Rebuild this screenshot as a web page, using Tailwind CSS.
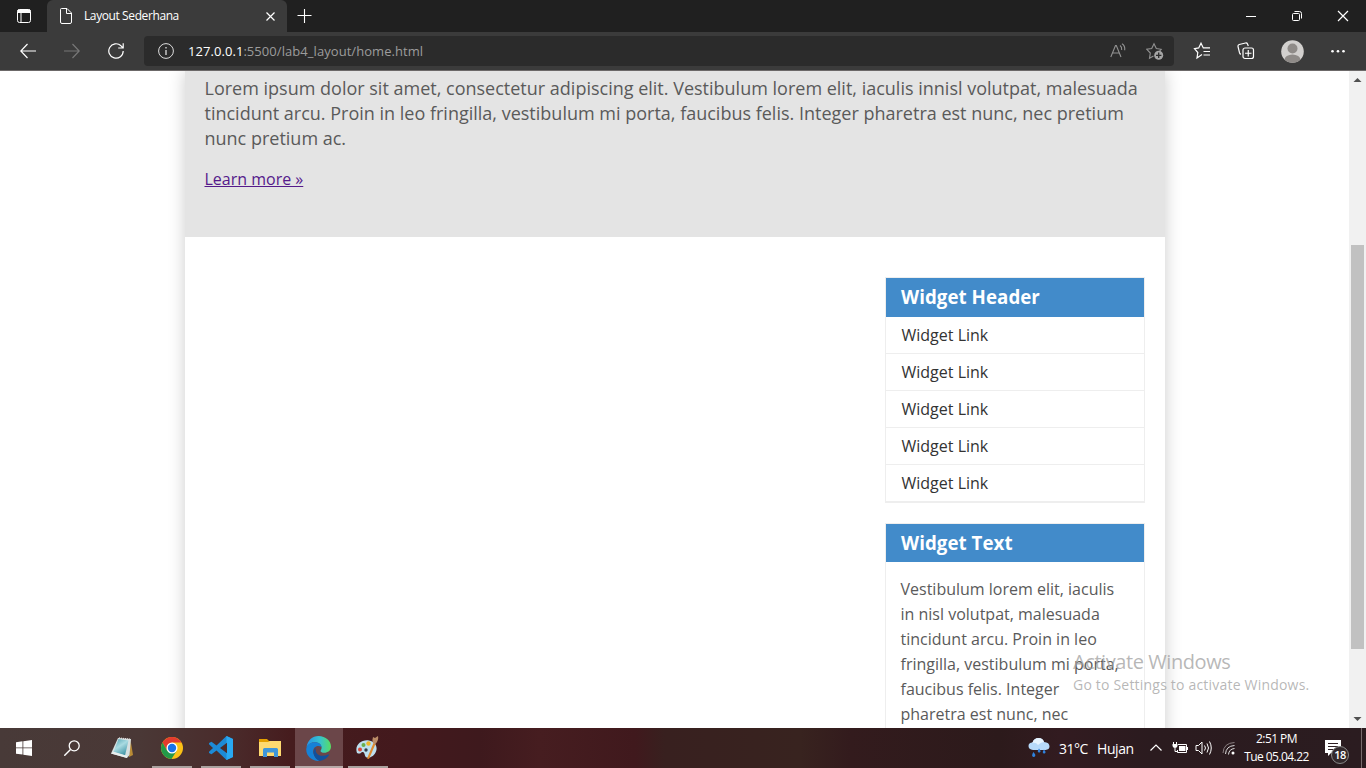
<!DOCTYPE html>
<html lang="id">
<head>
<meta charset="utf-8">
<title>Layout Sederhana</title>
<script src="https://cdn.jsdelivr.net/npm/@tailwindcss/browser@4"></script>
</head>
<body class="w-[1366px] h-[768px] overflow-hidden flex flex-col bg-white font-['Open_Sans',sans-serif]">
<!-- tab strip -->
<header class="h-8 shrink-0 bg-[#202020] flex text-white">
  <div class="w-[47px] flex items-center justify-center">
    <svg class="w-4 h-4" viewBox="0 0 16 16"><rect x="1.5" y="1.5" width="13" height="13" rx="2" fill="none" stroke="#fff"/><path d="M2 2h12v2.500H2z" fill="#fff" stroke="#fff"/><path d="M5 5v9.500" stroke="#fff"/></svg>
  </div>
  <div class="w-[240px] bg-[#3b3b3b] rounded-t-md flex items-center pl-[11px] pr-[10px]">
    <svg class="w-4 h-4" viewBox="0 0 16 16"><path d="M3.500.5h5.500l4.500 4.500v9q0 1.500-1.500 1.500H4q-1.500 0-1.500-1.500V1.500q0-1 1-1zM8.500.5v5h5" fill="none" stroke="#fff"/></svg>
    <span class="ml-[10px] text-[12px] leading-4 whitespace-nowrap tracking-[-0.4px]">Layout Sederhana</span>
    <svg class="w-3 h-3 ml-auto" viewBox="0 0 12 12"><path d="M1.500 2.500l8 8M9.500 2.500l-8 8" stroke="#fff" stroke-width="1.200"/></svg>
  </div>
  <div class="w-9 flex items-center justify-center"><svg class="w-4 h-4" viewBox="0 0 16 16"><path d="M7.500 1v14M.5 7.500h14" stroke="#fff" stroke-width="1.100"/></svg></div>
  <div class="ml-auto flex">
    <div class="w-[46px] flex items-center justify-center"><svg class="w-3 h-3" viewBox="0 0 12 12"><path d="M1 6.500h10" stroke="#fff"/></svg></div>
    <div class="w-[46px] flex items-center justify-center"><svg class="w-3 h-3" viewBox="0 0 12 12"><rect x="1.500" y="3.500" width="7" height="7" rx="1" fill="none" stroke="#fff"/><path d="M3.500 1.500h5q2 0 2 2v5" fill="none" stroke="#fff"/></svg></div>
    <div class="w-[46px] flex items-center justify-center"><svg class="w-3 h-3" viewBox="0 0 12 12"><path d="M1 1l10 10M11 1L1 11" stroke="#fff" stroke-width="1.200"/></svg></div>
  </div>
</header>
<!-- toolbar -->
<nav class="h-[39px] shrink-0 bg-[#3b3b3b] border-b border-[#6c6969] flex items-center">
  <svg class="w-4 h-4 ml-5" viewBox="0 0 16 16"><path d="M16 8H.8M7.500 1L.8 8l6.700 7" fill="none" stroke="#fff" stroke-width="1.200"/></svg>
  <svg class="w-4 h-4 ml-7" viewBox="0 0 16 16"><path d="M0 8h15.200M8.500 1l6.700 7-6.700 7" fill="none" stroke="#777" stroke-width="1.200"/></svg>
  <svg class="w-4 h-4 ml-7" viewBox="0 0 16 16"><path d="M15.200 8A7.200 7.200 0 1 1 13 2.800L15 4.900M15.200.3V5h-5" fill="none" stroke="#fff" stroke-width="1.200"/></svg>
  <div class="ml-5 w-[1030px] h-[30px] rounded-[4px] bg-[#2b2b2b] flex items-center pl-[14px]">
    <svg class="w-4 h-4" viewBox="0 0 16 16"><circle cx="8" cy="8" r="7.400" fill="none" stroke="#ddd"/><path d="M8 7v5M8 4v1.500" stroke="#ddd" stroke-width="1.300"/></svg>
    <span class="ml-[14px] text-[13px] leading-5 tracking-[0.060px] text-[#9c9c9c] whitespace-nowrap"><span class="text-white">127.0.0.1</span>:5500/lab4_layout/home.html</span>
    <svg class="w-4 h-4 ml-auto" viewBox="0 0 16 16"><path d="M.8 14L5.500 2.500h.8L11 14M2.500 10h7M10 2.500q2 1.300 1.700 4.500M12 .8q3.300 2 2.700 6.500" fill="none" stroke="#929292" stroke-width="1.100"/></svg>
    <svg class="w-[18px] h-[18px] ml-5 mr-[10px]" viewBox="0 0 18 18"><path d="M7.500 14l-4 2.300.8-5.300L.8 7.300l4.900-.8L8 1.700l2.300 4.800 4.900.8-1.600 1.700" fill="none" stroke="#929292" stroke-width="1.100"/><circle cx="12.700" cy="13.300" r="4.500" fill="#a5a5a5"/><path d="M10 13.300h5.400M12.700 10.600V16" stroke="#2b2b2b" stroke-width="1.300"/></svg>
  </div>
  <svg class="w-[18px] h-[18px] ml-[19px]" viewBox="0 0 18 18"><path d="M9 12.500l-5 3.500.8-5.500L1.500 6.600l4.200-.7L8 1.200l2.300 4.700h4.500M10.500 9.500H17M10.500 13H17M11 5.900h6" fill="none" stroke="#fff" stroke-width="1.200"/></svg>
  <svg class="w-[18px] h-[18px] ml-[26px]" viewBox="0 0 18 18"><rect x="6" y="6" width="10.500" height="10.500" rx="2" fill="none" stroke="#fff" stroke-width="1.200"/><path d="M11.250 8v6.500M8 11.250h6.500M4 12.200q-1 0-1.500-1.500L1 4.500q-.3-1.500 1.200-2L8.500 1q1.500-.3 2 1l.8 2" fill="none" stroke="#fff" stroke-width="1.200"/></svg>
  <svg class="w-[23px] h-[23px] ml-[26px]" viewBox="0 0 23 23"><defs><clipPath id="avatar"><circle cx="11.500" cy="11.500" r="11.300"/></clipPath></defs><g clip-path="url(#avatar)"><path fill="#d2d0ce" d="M0 0h23v23H0z"/><circle cx="11.500" cy="8.500" r="5" fill="#8f8b88"/><ellipse cx="11.500" cy="20" rx="8" ry="5.500" fill="#8f8b88"/></g></svg>
  <svg class="w-4 h-4 ml-[26px]" viewBox="0 0 16 16" fill="#fff"><circle cx="2.500" cy="8.300" r="1.300"/><circle cx="8" cy="8.300" r="1.300"/><circle cx="13.500" cy="8.300" r="1.300"/></svg>
</nav>
<!-- page viewport -->
<main class="h-[657px] shrink-0 flex relative overflow-hidden">
  <div class="w-[1349px] h-[657px] pl-[185px] overflow-hidden">
    <div class="w-[980px] h-[680px] bg-white shadow-[0_0_16px_#cccccc]">
      <section class="h-[166px] bg-[#e4e4e4] pl-[19.5px] pt-[5px] text-[#5a5a5a]">
        <p class="text-[18px] leading-[25px] whitespace-nowrap">Lorem ipsum dolor sit amet, consectetur adipiscing elit. Vestibulum lorem elit, iaculis innisl volutpat, malesuada<br>tincidunt arcu. Proin in leo fringilla, vestibulum mi porta, faucibus felis. Integer pharetra est nunc, nec pretium<br>nunc pretium ac.</p>
        <a class="block w-max mt-[16px] text-[16px] leading-[25px] underline text-[#551a8b]">Learn more »</a>
      </section>
      <aside class="ml-[700px] w-[260px] pt-10 text-[16px]">
        <div class="border border-[#eee]">
          <h3 class="h-[39px] bg-[#428bca] text-white font-bold text-[18.720px] leading-[38px] pl-[15px] tracking-[0.05px]">Widget Header</h3>
          <ul class="text-[#333]">
            <li class="h-[37px] pl-[15.5px] leading-[36px] border-b border-[#eee]">Widget Link</li>
            <li class="h-[37px] pl-[15.5px] leading-[36px] border-b border-[#eee]">Widget Link</li>
            <li class="h-[37px] pl-[15.5px] leading-[36px] border-b border-[#eee]">Widget Link</li>
            <li class="h-[37px] pl-[15.5px] leading-[36px] border-b border-[#eee]">Widget Link</li>
            <li class="h-[37px] pl-[15.5px] leading-[36px] border-b border-[#eee]">Widget Link</li>
          </ul>
        </div>
        <div class="mt-5 border border-[#eee] h-[240px]">
          <h3 class="h-[38px] bg-[#428bca] text-white font-bold text-[18.720px] leading-[38px] pl-[15px] tracking-[0.05px]">Widget Text</h3>
          <p class="pl-[14.5px] pt-[15px] leading-[25px] text-[#5a5a5a] whitespace-nowrap">Vestibulum lorem elit, iaculis<br>in nisl volutpat, malesuada<br>tincidunt arcu. Proin in leo<br>fringilla, vestibulum mi porta,<br>faucibus felis. Integer<br>pharetra est nunc, nec</p>
        </div>
      </aside>
    </div>
  </div>
  <div class="w-[17px] bg-[#f1f1f1] flex flex-col items-center relative z-10">
    <svg class="w-[17px] h-[17px]" viewBox="0 0 17 17"><path d="M4.500 11L8.500 7l4 4z" fill="#505050"/></svg>
    <div class="mt-[157px] w-[13px] h-[404px] bg-[#c1c1c1]"></div>
    <svg class="w-[17px] h-[17px] mt-auto" viewBox="0 0 17 17"><path d="M4.500 6L8.500 10l4-4z" fill="#505050"/></svg>
  </div>
  <div class="absolute left-[1073px] top-[577px] text-[#a0a0a0]/75 whitespace-nowrap">
    <div class="text-[20px] leading-7 tracking-[-0.420px]">Activate Windows</div>
    <div class="text-[14px] leading-[18px] tracking-[0.2px]">Go to Settings to activate Windows.</div>
  </div>
</main>
<!-- taskbar -->
<footer class="h-10 shrink-0 flex text-white bg-[linear-gradient(90deg,#483a38_0px,#4a3836_140px,#4a2b2b_230px,#461c1e_290px,#43191d_400px,#3e191d_480px,#461d20_540px,#40191d_635px,#38201f_665px,#38231f_800px,#331b1d_850px,#2c1a1b_1000px,#321b20_1060px,#2b1b1f_1150px,#2b1c20_1366px)]">
  <div class="w-12 flex items-center justify-center"><svg class="w-4 h-4" viewBox="0 0 16 16" fill="#fff"><path d="M0 2.200l6.500-.9v6.200H0zM7.300 1.200L16 0v7.500H7.300zM0 8.300h6.500v6.200L0 13.700zM7.300 8.300H16V16l-8.700-1.200z"/></svg></div>
  <div class="w-12 flex items-center justify-center"><svg class="w-4 h-4" viewBox="0 0 16 16"><circle cx="10.200" cy="5.800" r="5" fill="none" stroke="#fff" stroke-width="1.300"/><path d="M6.500 9.500L.3 15.700" stroke="#fff" stroke-width="1.400"/></svg></div>
  <div class="w-[52px] flex items-center justify-center"><svg class="w-[24px] h-[24px]" viewBox="0 0 24 24"><defs><linearGradient id="note" x2=".6" y2="1"><stop stop-color="#4d9fae"/><stop offset=".5" stop-color="#a9dbe2"/><stop offset="1" stop-color="#4597a8"/></linearGradient></defs><path d="M20.500 4l2.500 15-4 2z" fill="#b98b35"/><path d="M8 2L1 17.500 17 22l2.500-3L21 3z" fill="#d6e0e1"/><path d="M8.500 3L3.500 16 15 19.500l3.500-15z" fill="url(#note)"/><path d="M1 17.500l2.500-1.700L17 19.800V22z" fill="#e9eeee"/><path d="M9 2l12 1.500" stroke="#ddd" stroke-width="1.500" stroke-dasharray="1 1"/></svg></div>
  <div class="w-12 flex items-center justify-center relative">
    <svg class="w-6 h-6" viewBox="0 0 24 24"><circle cx="12" cy="12" r="11" fill="#fbc116"/><path d="M2.500 6.500A11 11 0 0 1 21.500 6.500H12L7.200 14.700z" fill="#e33b2e"/><path d="M2.500 6.500A11 11 0 0 0 11.500 23l5.200-8.300H7.200z" fill="#229a49"/><circle cx="12" cy="12" r="5.500" fill="#fff"/><circle cx="12" cy="12" r="4.200" fill="#1a73e8"/></svg>
    <i class="absolute bottom-0 left-1 w-10 h-0.5 bg-[#aaa29f]"></i>
  </div>
  <div class="w-[50px] flex items-center justify-center relative">
    <svg class="w-6 h-6" viewBox="0 0 24 24"><path d="M17.500 0L24 3v18l-6.500 3L7.500 14.500 2.500 18.300 0 17v-1.300L4 12 0 8.300V7l2.500-1.300 5 3.800z" fill="#1d8ad6"/><path d="M17.500 0L24 3v18l-6.500 3z" fill="#29a9f2"/><path d="M18 6.800v10.400L11 12z" fill="#4a2b2b"/></svg>
    <i class="absolute bottom-0 left-[5px] w-10 h-0.5 bg-[#aaa29f]"></i>
  </div>
  <div class="w-[49px] flex items-center justify-center relative">
    <svg class="w-6 h-6 -ml-[2px]" viewBox="0 0 24 24"><path d="M1 3h8l2 2h12v15H1z" fill="#e5a000"/><path d="M1 6h9l2-1h11v15H1z" fill="#ffda70"/><path d="M5 21v-7.500q0-1.500 1.500-1.500h12q1.500 0 1.500 1.500V21h-4v-4.500H9V21z" fill="#3f96da"/></svg>
    <i class="absolute bottom-0 left-1 w-10 h-0.5 bg-[#aaa29f]"></i>
  </div>
  <div class="w-12 bg-[#6b4649] flex items-center justify-center relative">
    <svg class="w-[25px] h-[25px] -ml-px" viewBox="0 0 24 24"><defs><linearGradient id="wave" x2="1"><stop stop-color="#2493e7"/><stop offset=".55" stop-color="#36c3cf"/><stop offset="1" stop-color="#58dd62"/></linearGradient></defs><path d="M.5 11C1.500 4 6 0 12 0c7 0 12 5 12 10 0 4-3 6-6.500 6-2 0-3.500-.7-3.500-1.700 0-.8 1-1.300 1-3C15 8 12 6 8.500 6 5 6 2 8 .5 11z" fill="url(#wave)"/><path d="M.3 12C1 8.500 4 6 8.500 6c3.500 0 6 2 6.500 4.500C10 8 6.500 11.500 7 15.500c.5 4 3 7 6 8.400C6 24.500-.5 19 .3 12z" fill="#1681d6"/><path d="M9.500 11.500C7 13 6.500 16 8 19c1 2.200 3 4.300 5 4.900 4-.4 7.300-2.500 9-5.400.3-.6-.2-1-.7-.7-5 2.500-10.300 1-11.600-2.300-.5-1.300-.6-2.500-.2-4z" fill="#11509c"/></svg>
    <i class="absolute bottom-0 left-0 w-12 h-0.5 bg-[#b8aaa9]"></i>
  </div>
  <div class="w-[50px] flex items-center justify-center relative">
    <svg class="w-[25px] h-[24px] -ml-[2px]" viewBox="0 0 25 24"><path d="M2 17C-1 9 7 3 14 4.500c6 1 9 6 7 11-1.500 4-5 6.500-9 6-3-.5-1.500-4.500-4-5.500-2-.8-2 3-6 1z" fill="#bddfef"/><circle cx="5" cy="13.500" r="2" fill="#d8493b"/><circle cx="8.500" cy="9" r="2" fill="#68ae4d"/><circle cx="13.500" cy="7.500" r="2.200" fill="#f0b529"/><circle cx="11" cy="14" r="1.700" fill="#333c48"/><path d="M18.500 7l2 1-6.500 15-2-.5z" fill="#de8b31"/><path d="M18 7q-1-4 0-6l2 1 3-2q1 4-2.500 8z" fill="#bb8c67"/></svg>
    <i class="absolute bottom-0 left-[5px] w-10 h-0.5 bg-[#aaa29f]"></i>
  </div>
  <div class="ml-auto flex items-center">
    <svg class="w-[22px] h-[22px]" viewBox="0 0 22 22"><path d="M5 13Q.5 12.500.5 9q0-3.500 4-3.500Q6 1 10.500 1q4 0 5.500 4 5.500.3 5.500 4.500 0 3-4 3.500z" fill="#b7dafa"/><path d="M4 6q4-1 6 2 3-3 6-3-1-4-5.500-4T4.500 5.500z" fill="#e6f4ff"/><path d="M5.500 15q-2.600 4-.3 5 2.600 0 2-2.500zM11 11.500q-2.300 3-.3 4 2.300 0 1.700-2zM16 12.500q-2.300 3-.3 4 2.300 0 1.700-2z" fill="#2f82de"/></svg>
    <span class="ml-[9px] w-[38px] text-[14px] whitespace-nowrap tracking-[-0.500px]">31°C</span>
    <span class="w-[53px] text-[14px] whitespace-nowrap tracking-[-0.400px]">Hujan</span>
    <svg class="w-3 h-3" viewBox="0 0 12 12"><path d="M.5 8.500L6 3l5.500 5.500" fill="none" stroke="#fff" stroke-width="1.200"/></svg>
    <svg class="w-4 h-4 ml-[10px]" viewBox="0 0 16 16"><path d="M6 4.500h8.500v8h-9V10" fill="none" stroke="#fff"/><path d="M7 6h6.500v5H7zM15 7h1v3h-1zM.5 4h5v2q-.5 2-2.500 2T.5 6z" fill="#fff"/><path d="M1.500 2v2M4.500 2v2M3 8v3.500h2.500" stroke="#fff" fill="none"/></svg>
    <svg class="w-[18px] h-4 ml-[7px]" viewBox="0 0 18 16"><path d="M1 5.500h2.500L7 2v12l-3.500-3.500H1zM9.500 5.500q2 2.500 0 5M12 3.500q3 4.500 0 9M14.500 1.500q3.500 6.500 0 13" fill="none" stroke="#fff"/></svg>
    <svg class="w-[14px] h-[14px] ml-[9px]" viewBox="0 0 14 14"><g fill="none"><path d="M1 12Q1.500 2 12.500 1.500" stroke="#887e80"/><path d="M3.500 13Q4 5 12.500 4.500M6.500 13.500Q7 8 12.500 7.500" stroke="#ddd"/></g><circle cx="11" cy="12" r="1.500" fill="#fff"/></svg>
    <div class="ml-[6px] w-[69px] text-center text-[12px] leading-[18px] whitespace-nowrap tracking-[-0.550px] pb-[1px]">2:51 PM<br>Tue 05.04.22</div>
    <div class="relative w-[55px] h-10">
      <svg class="absolute left-[14px] top-3 w-4 h-4" viewBox="0 0 16 16"><path d="M0 0h16v13H6l-3 3v-3H0z" fill="#fff"/><path d="M3 3.500h10M3 6.500h10M3 9.500h7" stroke="#302024"/></svg>
      <span class="absolute left-5 top-[18px] w-[18px] h-[18px] rounded-full border border-[#888] bg-[#33292c] text-[11px] leading-4 font-semibold text-center tracking-[-0.500px]">18</span>
      <i class="absolute right-1 top-0 w-px h-10 bg-[#786b6d]"></i>
    </div>
  </div>
</footer>
</body>
</html>
